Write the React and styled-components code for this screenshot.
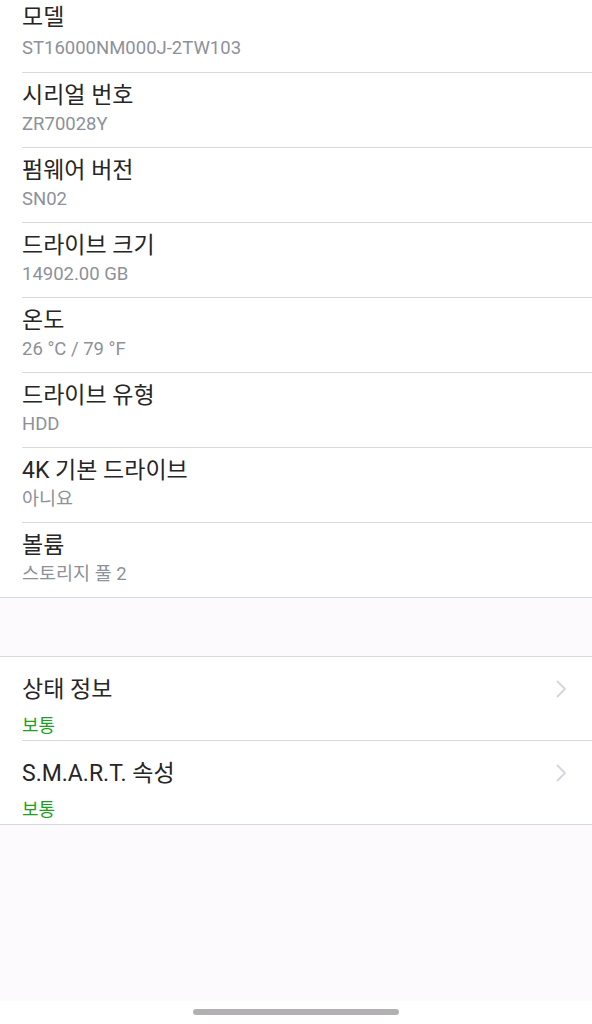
import React from 'react'
import styled, { createGlobalStyle } from 'styled-components'

const GlobalStyle = createGlobalStyle`
  html, body {
    margin: 0;
    padding: 0;
    background: #fdfafd;
  }
  body {
    font-family: Roboto, "Noto Sans CJK KR", sans-serif;
  }
`

const details = [
    { label: '모델', value: 'ST16000NM000J-2TW103' },
    { label: '시리얼 번호', value: 'ZR70028Y' },
    { label: '펌웨어 버전', value: 'SN02' },
    { label: '드라이브 크기', value: '14902.00 GB' },
    { label: '온도', value: '26 °C / 79 °F' },
    { label: '드라이브 유형', value: 'HDD' },
    { label: '4K 기본 드라이브', value: '아니요' },
    { label: '볼륨', value: '스토리지 풀 2' },
]

const links = [
    { label: '상태 정보', status: '보통' },
    { label: 'S.M.A.R.T. 속성', status: '보통' },
]

function Chevron() {
    return (
        <svg width="12" height="20" viewBox="0 0 12 20" fill="none">
            <path d="M2.5 2.5 L10 10 L2.5 17.5" stroke="#d5d5de" strokeWidth="1.8" strokeLinecap="round" strokeLinejoin="round" />
        </svg>
    )
}

function App() {
    return (
        <Page>
            <GlobalStyle />
            <Section>
                {details.map((d, i) => (
                    <InfoRow key={d.label} first={i === 0} last={i === details.length - 1}>
                        <Title>{d.label}</Title>
                        <Sub>{d.value}</Sub>
                    </InfoRow>
                ))}
            </Section>
            <Gap />
            <Section bordered>
                {links.map((l, i) => (
                    <LinkRow key={l.label} last={i === links.length - 1}>
                        <LinkText>
                            <Title>{l.label}</Title>
                            <Status>{l.status}</Status>
                        </LinkText>
                        <Chevron />
                    </LinkRow>
                ))}
            </Section>
            <Filler />
            <NavBar>
                <HomeBar />
            </NavBar>
        </Page>
    )
}

const Page = styled.div`
  display: flex;
  flex-direction: column;
  width: 592px;
  height: 1024px;
  overflow: hidden;
  background: #fdfafd;
`

const Section = styled.div`
  background: #ffffff;
  border-top: ${p => (p.bordered ? '1px solid #d8d9de' : 'none')};
  border-bottom: 1px solid #d8d9de;
`

const InfoRow = styled.div`
  display: flex;
  flex-direction: column;
  margin-left: 22px;
  padding: ${p => (p.first ? '4px 0 11px' : '9px 0 12px')};
  border-bottom: ${p => (p.last ? 'none' : '1px solid #d8d9de')};
  height: ${p => (p.first ? '57px' : '53px')};
  gap: ${p => (p.first ? '6px' : '4px')};
`

const Title = styled.div`
  font-size: 23px;
  line-height: 27px;
  color: #262626;
`

const Sub = styled.div`
  font-size: 18.5px;
  line-height: 22px;
  color: #8d919a;
`

const Gap = styled.div`
  height: 58px;
`

const LinkRow = styled.div`
  display: flex;
  align-items: flex-start;
  justify-content: space-between;
  margin-left: 22px;
  padding-right: 25px;
  border-bottom: ${p => (p.last ? 'none' : '1px solid #d8d9de')};
  height: ${p => (p.last ? '83px' : '84px')};
  box-sizing: border-box;
  svg {
    margin-top: 22px;
  }
`

const LinkText = styled.div`
  display: flex;
  flex-direction: column;
  gap: 12px;
  padding-top: 19px;
`

const Status = styled.div`
  font-size: 18px;
  line-height: 22px;
  color: #1e9f1e;
`

const Filler = styled.div`
  flex: 1;
`

const NavBar = styled.div`
  height: 23px;
  background: #ffffff;
  display: flex;
  justify-content: center;
  align-items: flex-start;
`

const HomeBar = styled.div`
  margin-top: 8px;
  width: 206px;
  height: 6px;
  border-radius: 3px;
  background: #b2b0b3;
`

export default App
